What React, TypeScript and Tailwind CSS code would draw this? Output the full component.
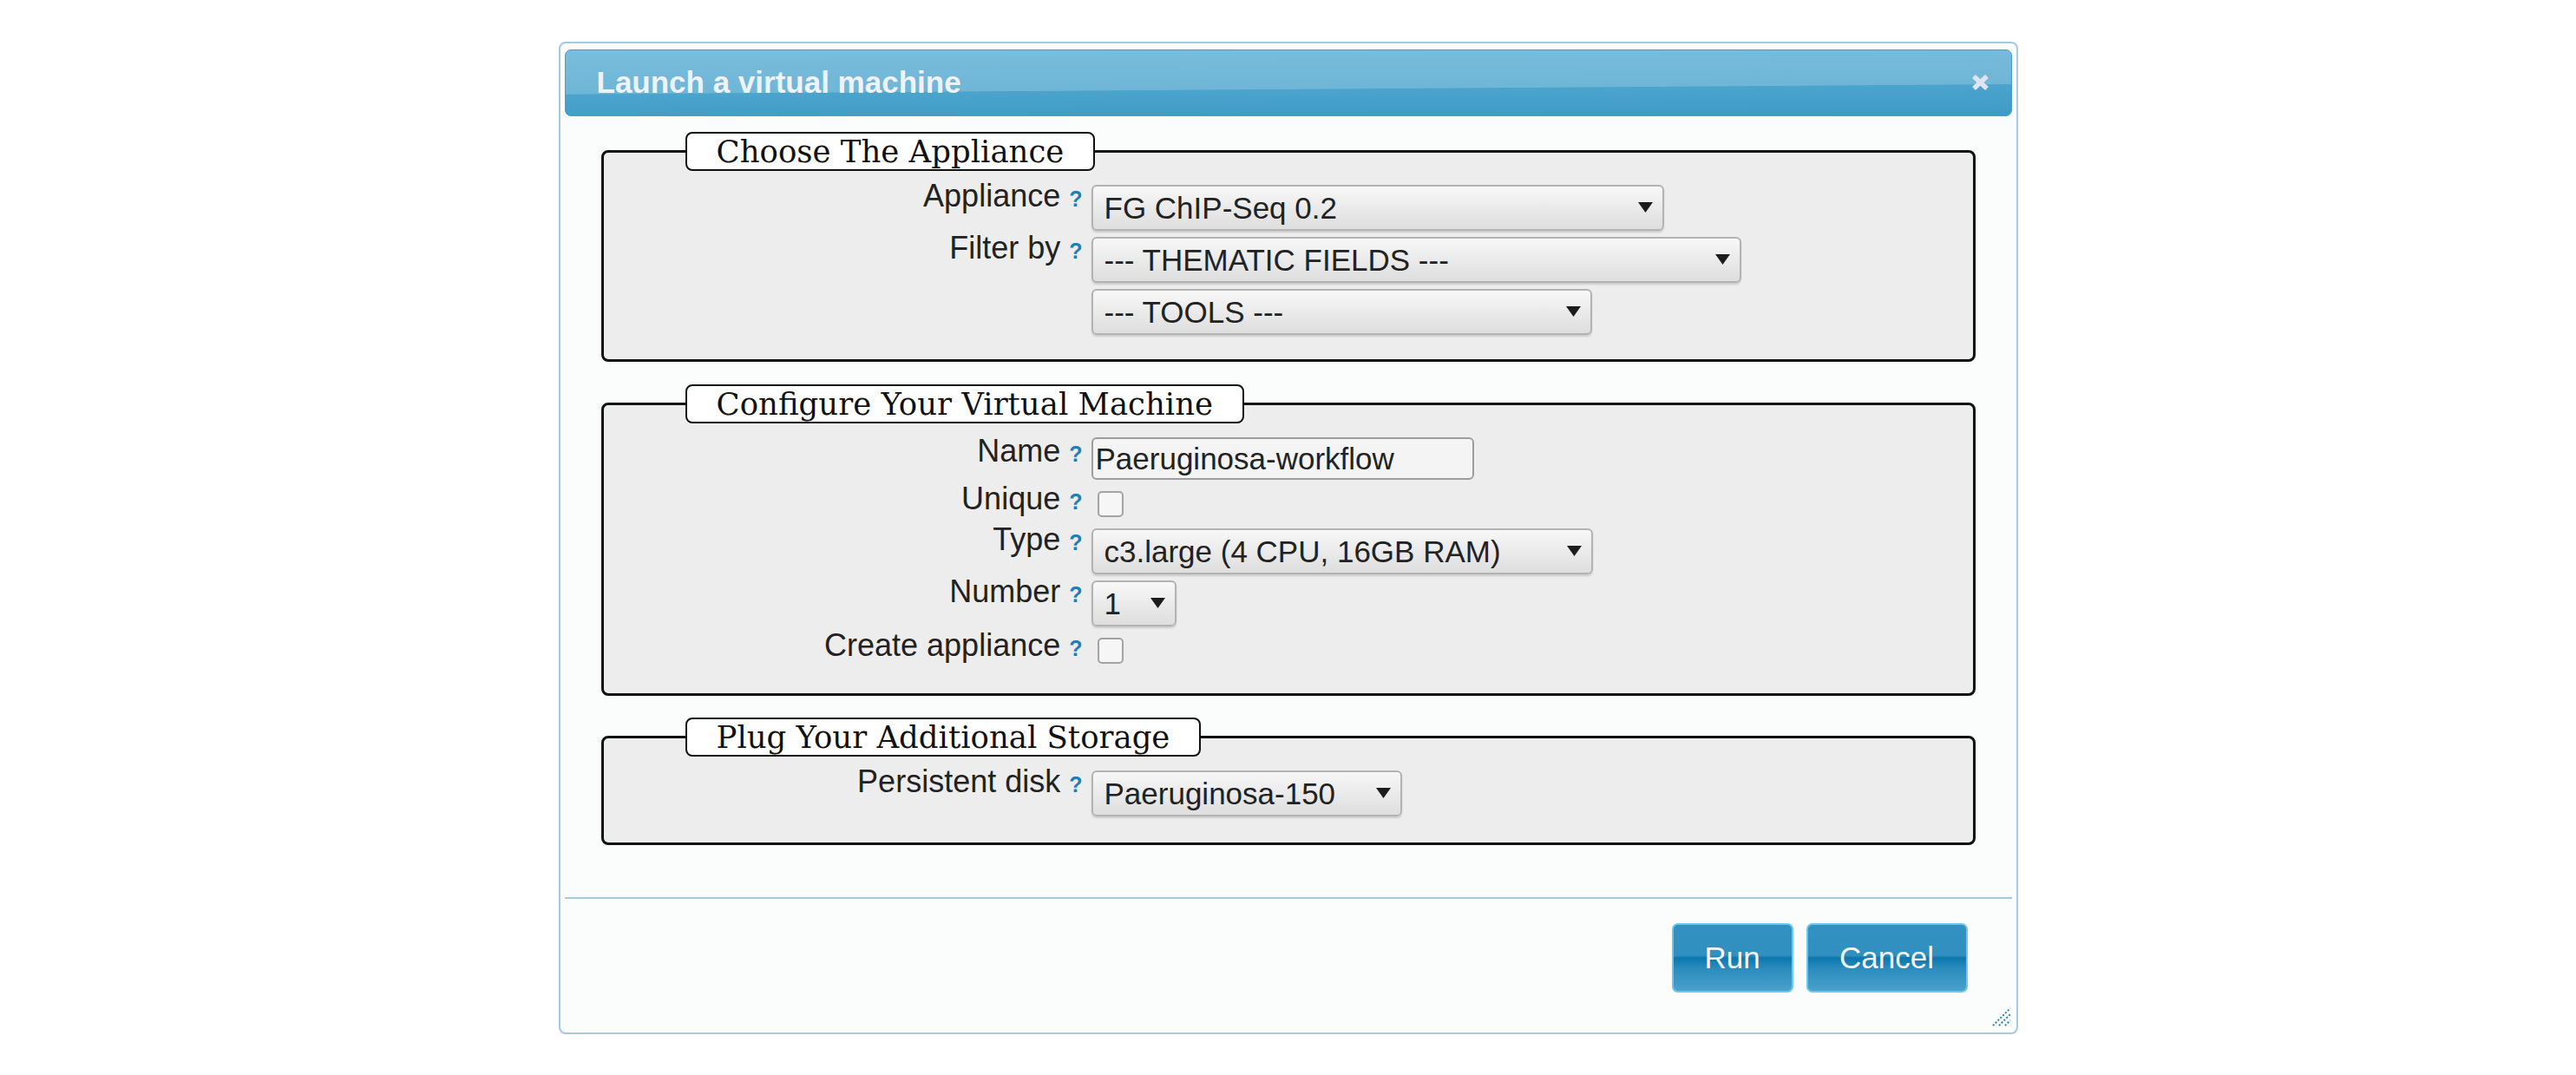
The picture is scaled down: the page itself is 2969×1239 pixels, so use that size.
import type { ReactNode } from 'react';

type Field = {
  label: string;
  control: ReactNode;
  check?: boolean;
  nudge?: string;
};

function Caret() {
  return (
    <svg width="17" height="12" viewBox="0 0 17 12" aria-hidden className="shrink-0">
      <path d="M0 0 H17 L8.5 12 Z" fill="#1c1c1c" />
    </svg>
  );
}

function Select({ value, width }: { value: string; width: string }) {
  return (
    <div
      className={`flex h-[53px] items-center justify-between rounded-[6px] border-2 border-[#b3b3b3] bg-[linear-gradient(#f7f7f7,#dedede)] pl-[13px] pr-[11px] shadow-[0_2px_2px_rgba(0,0,0,0.14)] ${width}`}
    >
      <span className="whitespace-nowrap text-[35px] leading-none text-[#222]">{value}</span>
      <Caret />
    </div>
  );
}

function TextInput({ value }: { value: string }) {
  return (
    <div className="flex h-[49px] w-[441px] items-center rounded-[6px] border-2 border-[#9d9d9d] bg-[#f4f4f4] pl-[3px]">
      <span className="text-[35px] leading-none text-[#222]">{value}</span>
    </div>
  );
}

function Checkbox() {
  return <div className="ml-[7px] h-[30px] w-[30px] rounded-[5px] border-2 border-[#a3a3a3] bg-[#f6f6f6]" />;
}

function Row({ label, control, check, nudge = '-mt-[5px]' }: Field) {
  return (
    <div className={`flex items-start ${check ? 'py-[6px]' : ''}`}>
      <div className={`w-[552px] shrink-0 text-right text-[36px] leading-none text-[#222] ${nudge}`}>
        {label ? (
          <>
            {label} <span className="text-[25px] font-bold text-[#1b7fb9]">?</span>
          </>
        ) : null}
      </div>
      <div className="ml-[10px]">{control}</div>
    </div>
  );
}

function Section({
  title,
  fields,
  className = '',
  bottom = 'pb-[28px]',
}: {
  title: string;
  fields: Field[];
  className?: string;
  bottom?: string;
}) {
  return (
    <fieldset className={`rounded-[8px] border-[3px] border-[#111] bg-[#ededed] ${className}`}>
      <legend className="ml-[94px] rounded-[8px] border-2 border-[#111] bg-white px-[34px] font-['DejaVu_Serif',serif] text-[35.5px] leading-[41px] text-[#111]">
        {title}
      </legend>
      <div className={`flex flex-col gap-[7px] pt-[16px] ${bottom}`}>
        {fields.map((f, i) => (
          <Row key={i} {...f} />
        ))}
      </div>
    </fieldset>
  );
}

const APPLIANCE: Field[] = [
  { label: 'Appliance', control: <Select value="FG ChIP-Seq 0.2" width="w-[660px]" /> },
  { label: 'Filter by', control: <Select value="--- THEMATIC FIELDS ---" width="w-[749px]" /> },
  { label: '', control: <Select value="--- TOOLS ---" width="w-[577px]" /> },
];

const MACHINE: Field[] = [
  { label: 'Name', control: <TextInput value="Paeruginosa-workflow" />, nudge: '-mt-[2px]' },
  { label: 'Unique', control: <Checkbox />, check: true, nudge: '-mt-[9px]' },
  { label: 'Type', control: <Select value="c3.large (4 CPU, 16GB RAM)" width="w-[578px]" /> },
  { label: 'Number', control: <Select value="1" width="w-[98px]" /> },
  { label: 'Create appliance', control: <Checkbox />, check: true, nudge: '-mt-[9px]' },
];

const STORAGE: Field[] = [
  { label: 'Persistent disk', control: <Select value="Paeruginosa-150" width="w-[358px]" /> },
];

function DialogButton({ children, width }: { children: ReactNode; width: string }) {
  return (
    <button
      type="button"
      className={`h-[80px] rounded-[7px] border-2 border-[#6fc6ee] bg-[linear-gradient(#3391c1_0%,#3290c0_46%,#0b77ad_50%,#2b8cbd_66%,#4aa2ca_100%)] text-[35px] leading-none text-[#f1f5fb] ${width}`}
    >
      {children}
    </button>
  );
}

export default function App() {
  return (
    <div className="flex h-screen items-center justify-center bg-white font-['Liberation_Sans',Arial,sans-serif]">
      <div className="relative flex h-[1144px] w-[1682px] flex-col rounded-[8px] border-2 border-[#a6c9e2] bg-[#fbfcfc] px-[5px] pt-[7px]">
        {/* title bar */}
        <div className="flex h-[77px] shrink-0 items-center justify-between rounded-[7px] border border-[#4a9ad2] bg-[linear-gradient(179.6deg,#7abddc_0%,#6fb5d6_58%,#4aa4cc_59%,#3f9ac6_100%)] pl-[36px] pr-[25px]">
          <span className="text-[35px] font-bold text-[#eef3fb]">Launch a virtual machine</span>
          <svg width="21" height="20" viewBox="0 0 21 20" aria-hidden>
            <path d="M3 3 L18 17 M18 3 L3 17" stroke="#dfe4f4" strokeWidth="5.5" />
          </svg>
        </div>

        <div className="flex flex-col px-[42px]">
          <Section title="Choose The Appliance" fields={APPLIANCE} className="mt-[18px]" />
          <Section title="Configure Your Virtual Machine" fields={MACHINE} className="mt-[26px]" />
          <Section title="Plug Your Additional Storage" fields={STORAGE} className="mt-[25px]" bottom="pb-[30px]" />
        </div>

        <div className="mt-[60px] h-[2px] shrink-0 bg-[#a6c9e2]" />

        <div className="flex justify-end gap-[15px] pr-[51px] pt-[28px]">
          <DialogButton width="w-[140px]">Run</DialogButton>
          <DialogButton width="w-[186px]">Cancel</DialogButton>
        </div>

        {/* resize grip */}
        <svg
          width="24"
          height="24"
          viewBox="0 0 24 24"
          aria-hidden
          className="absolute bottom-[6px] right-[5px]"
        >
          <path d="M2 22 L22 2 M9 22 L22 9 M16 22 L22 16" stroke="#2a7fb8" strokeWidth="2" strokeDasharray="2 2" />
        </svg>
      </div>
    </div>
  );
}
